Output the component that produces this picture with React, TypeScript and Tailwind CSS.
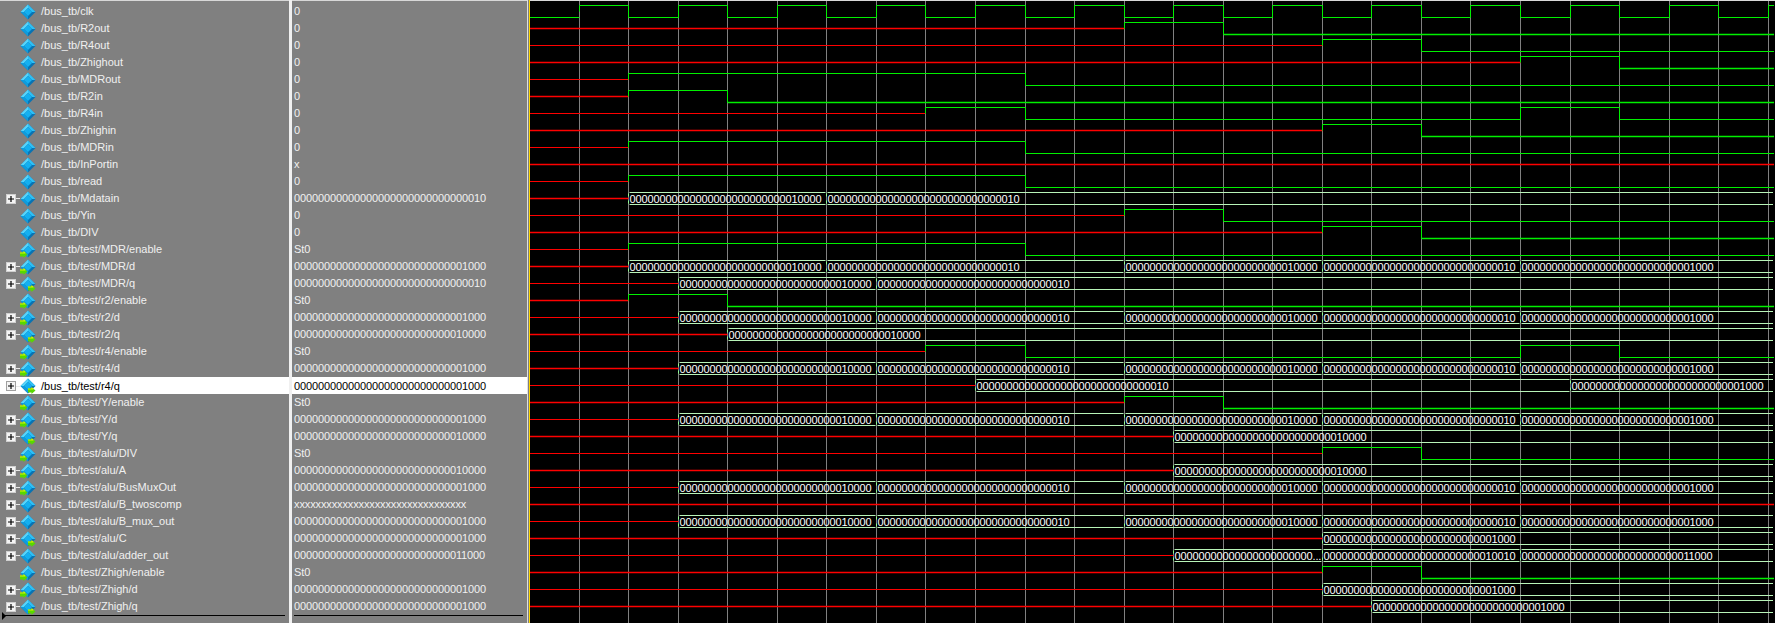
import React from "react";

type Icon = "plain" | "in" | "out";
type Seg = [number, string];

const bits = (tail: string) => tail.padStart(32, "0");
const xOf = (k: number) => Math.round(530 + 49.55 * k) + 0.5;
const TICKS = Array.from({ length: 26 }, (_, k) => k).filter((k) => k > 0);

// levels: "x" unknown, "1" high, "0" low, anything else is a bus value
const clock: Seg[] = [[0, "x0"]];
for (let k = 1; k <= 26; k++) clock.push([k, k % 2 ? "1" : "0"]);

const pulse = (from: number, to: number): Seg[] => [[0, "x"], [from, "1"], [to, "0"]];
const v10000 = bits("10000");
const v10 = bits("10");
const v1000 = bits("1000");
const dBus = (start: number): Seg[] => [[0, "x"], [start, v10000], [start + 4, v10], [12, v10000], [16, v10], [20, v1000]];

type Row = { name: string; value: string; icon: Icon; bus?: boolean; wave: Seg[] };

const rows: Row[] = [
  { name: "/bus_tb/clk", value: "0", icon: "plain", wave: clock },
  { name: "/bus_tb/R2out", value: "0", icon: "plain", wave: pulse(12, 14) },
  { name: "/bus_tb/R4out", value: "0", icon: "plain", wave: pulse(16, 18) },
  { name: "/bus_tb/Zhighout", value: "0", icon: "plain", wave: pulse(20, 22) },
  { name: "/bus_tb/MDRout", value: "0", icon: "plain", wave: pulse(2, 10) },
  { name: "/bus_tb/R2in", value: "0", icon: "plain", wave: pulse(2, 4) },
  { name: "/bus_tb/R4in", value: "0", icon: "plain", wave: [[0, "x"], [8, "1"], [10, "0"], [20, "1"], [22, "0"]] },
  { name: "/bus_tb/Zhighin", value: "0", icon: "plain", wave: pulse(16, 18) },
  { name: "/bus_tb/MDRin", value: "0", icon: "plain", wave: pulse(2, 10) },
  { name: "/bus_tb/InPortin", value: "x", icon: "plain", wave: [[0, "x"]] },
  { name: "/bus_tb/read", value: "0", icon: "plain", wave: pulse(2, 10) },
  { name: "/bus_tb/Mdatain", value: v10, icon: "plain", bus: true, wave: [[0, "x"], [2, v10000], [6, v10]] },
  { name: "/bus_tb/Yin", value: "0", icon: "plain", wave: pulse(12, 14) },
  { name: "/bus_tb/DIV", value: "0", icon: "plain", wave: pulse(16, 18) },
  { name: "/bus_tb/test/MDR/enable", value: "St0", icon: "in", wave: pulse(2, 10) },
  { name: "/bus_tb/test/MDR/d", value: v1000, icon: "in", bus: true, wave: [[0, "x"], [2, v10000], [6, v10], [12, v10000], [16, v10], [20, v1000]] },
  { name: "/bus_tb/test/MDR/q", value: v10, icon: "out", bus: true, wave: [[0, "x"], [3, v10000], [7, v10]] },
  { name: "/bus_tb/test/r2/enable", value: "St0", icon: "in", wave: pulse(2, 4) },
  { name: "/bus_tb/test/r2/d", value: v1000, icon: "in", bus: true, wave: dBus(3) },
  { name: "/bus_tb/test/r2/q", value: v10000, icon: "out", bus: true, wave: [[0, "x"], [4, v10000]] },
  { name: "/bus_tb/test/r4/enable", value: "St0", icon: "in", wave: [[0, "x"], [8, "1"], [10, "0"], [20, "1"], [22, "0"]] },
  { name: "/bus_tb/test/r4/d", value: v1000, icon: "in", bus: true, wave: dBus(3) },
  { name: "/bus_tb/test/r4/q", value: v1000, icon: "out", bus: true, wave: [[0, "x"], [9, v10], [21, v1000]] },
  { name: "/bus_tb/test/Y/enable", value: "St0", icon: "in", wave: pulse(12, 14) },
  { name: "/bus_tb/test/Y/d", value: v1000, icon: "in", bus: true, wave: dBus(3) },
  { name: "/bus_tb/test/Y/q", value: v10000, icon: "out", bus: true, wave: [[0, "x"], [13, v10000]] },
  { name: "/bus_tb/test/alu/DIV", value: "St0", icon: "in", wave: pulse(16, 18) },
  { name: "/bus_tb/test/alu/A", value: v10000, icon: "in", bus: true, wave: [[0, "x"], [13, v10000]] },
  { name: "/bus_tb/test/alu/BusMuxOut", value: v1000, icon: "in", bus: true, wave: dBus(3) },
  { name: "/bus_tb/test/alu/B_twoscomp", value: "x".repeat(32), icon: "plain", bus: true, wave: [[0, "x"]] },
  { name: "/bus_tb/test/alu/B_mux_out", value: v1000, icon: "plain", bus: true, wave: dBus(3) },
  { name: "/bus_tb/test/alu/C", value: v1000, icon: "out", bus: true, wave: [[0, "x"], [16, v1000]] },
  { name: "/bus_tb/test/alu/adder_out", value: bits("11000"), icon: "plain", bus: true, wave: [[0, "x"], [13, "00000000000000000000000..."], [16, bits("10010")], [20, bits("11000")]] },
  { name: "/bus_tb/test/Zhigh/enable", value: "St0", icon: "in", wave: pulse(16, 18) },
  { name: "/bus_tb/test/Zhigh/d", value: v1000, icon: "in", bus: true, wave: [[0, "x"], [16, v1000]] },
  { name: "/bus_tb/test/Zhigh/q", value: v1000, icon: "out", bus: true, wave: [[0, "x"], [17, v1000]] },
];

const SELECTED = 22;
const GREEN = "#00f000";
const RED = "#ff0000";
const BUS = "#b8f4b8";

function SignalIcon({ icon }: { icon: Icon }) {
  return (
    <svg width="16" height="16" viewBox="0 0 16 16" className="shrink-0 overflow-visible">
      <polygon points="8,0.5 15.5,8 8,15.5 0.5,8" fill="#0874b4" />
      <polygon points="8,0.5 0.5,8 4,8 8,4" fill="#58d4fa" />
      <polygon points="8,0.5 15.5,8 12,8 8,4" fill="#30c0f4" />
      <polygon points="0.5,8 8,15.5 8,12 4,8" fill="#109cdc" />
      <polygon points="4,8 8,4 12,8 8,12" fill="#14b0f0" />
      {icon === "in" && (
        <>
          <path d="M0 10.5h3.5V9l4 3.5-4 3.5v-1.5H0z" fill="#58d800" />
          <path d="M0 10.5h3.5V9l2 1.75v.75H0z" fill="#d8f400" />
        </>
      )}
      {icon === "out" && (
        <>
          <path d="M8 10.5h3.5V9l4 3.5-4 3.5v-1.5H8z" fill="#58d800" />
          <path d="M8 10.5h3.5V9l2 1.75v.75H8z" fill="#d8f400" />
        </>
      )}
    </svg>
  );
}

function Expander({ selected }: { selected: boolean }) {
  return (
    <span className="flex w-[14px] shrink-0 items-center">
      <span
        className={`flex h-[10px] w-[10px] shrink-0 items-center justify-center border bg-[#f4f4f4] text-black ${
          selected ? "border-[#a0a0a0]" : "border-[#d0d0d0]"
        }`}
      >
        <svg width="6" height="6" viewBox="0 0 6 6">
          <path d="M0 3h6M3 0v6" stroke="#000" strokeWidth="1.2" />
        </svg>
      </span>
      <span className="h-px w-[4px] bg-[#e8e8e8]" />
    </span>
  );
}

function Wave({ row, index }: { row: Row; index: number }) {
  const top = 5.5 + 17 * index;
  const low = 17.5 + 17 * index;
  const mid = 11.5 + 17 * index;
  // every other row lands thicker in the reference
  const sw = index % 2 ? 1.5 : 1;
  const yFor = (lv: string) => (lv === "1" ? top : low);
  const out: React.ReactNode[] = [];

  row.wave.forEach(([k, lv], i) => {
    const x = k === 0 ? 531 : xOf(k);
    const next = row.wave[i + 1];
    const endX = next ? xOf(next[0]) : 1775;
    if (lv === "x" || lv === "x0") {
      if (lv === "x") out.push(<path key={i} d={`M${x} ${mid}H${endX}`} stroke={RED} strokeWidth={sw} fill="none" />);
      else {
        out.push(<path key={i} d={`M531 ${low}H${endX}`} stroke={GREEN} fill="none" />);
        out.push(<path key="tick" d={`M530.5 ${mid}V${low}`} stroke={RED} fill="none" />);
      }
      if (next && (next[1] === "1" || next[1] === "0")) {
        out.push(<path key={`e${i}`} d={`M${endX} ${mid}V${yFor(next[1])}`} stroke={GREEN} fill="none" />);
      }
    } else if (lv === "1" || lv === "0") {
      const y = yFor(lv);
      let d = `M${x} ${y}H${endX}`;
      if (next) d += `V${yFor(next[1])}`;
      out.push(<path key={i} d={d} stroke={GREEN} strokeWidth={lv === "0" ? sw : 1} fill="none" />);
    } else {
      out.push(
        <g key={i}>
          <path
            d={`M${x + 1} ${top}H${endX - 1}M${x + 1} ${low}H${endX - 1}`}
            stroke={BUS}
            fill="none"
          />
          <path
            d={`M${x} ${top + 1}v3M${x} ${low - 1}v-3`}
            stroke="#90ff90"
            fill="none"
          />
          <text x={x + 1} y={mid + 4} fill="#ffffff" className="text-[11px] tracking-[-0.12px]">
            {lv}
          </text>
        </g>
      );
    }
  });
  return <g>{out}</g>;
}

export default function App() {
  return (
    <div className="flex h-[623px] w-[1775px] overflow-hidden bg-[#808080] font-['Liberation_Sans',Arial,sans-serif] text-[11px] text-[#f0f0f0]">
      {/* signal names */}
      <div className="relative w-[289px] shrink-0 border-t border-[#d8d8d8] pt-[2px]">
        {rows.map((r, i) => (
          <div
            key={r.name}
            className={`flex h-[17px] items-center pl-[6px] ${i === SELECTED ? "bg-white pt-px text-black" : ""}`}
          >
            {r.bus ? <Expander selected={i === SELECTED} /> : <span className="w-[14px] shrink-0" />}
            <SignalIcon icon={r.icon} />
            <span className="ml-[5px] whitespace-nowrap">{r.name}</span>
          </div>
        ))}
        <div className="absolute bottom-[7px] left-[3px] right-[4px] h-px bg-black" />
        <span className="absolute bottom-[3px] left-[2px] h-0 w-0 border-y-[4px] border-l-[4px] border-y-transparent border-l-black" />
      </div>

      <div className="w-[3px] shrink-0 bg-[#f0f0f0]" />

      {/* signal values */}
      <div className="relative w-[235px] shrink-0 border-t border-[#d8d8d8] pt-[2px]">
        {rows.map((r, i) => (
          <div
            key={r.name}
            className={`flex h-[17px] items-center pl-[2px] ${i === SELECTED ? "bg-white pt-px text-black" : ""}`}
          >
            <span className="whitespace-nowrap tracking-[-0.12px]">{r.value}</span>
          </div>
        ))}
        <div className="absolute bottom-[7px] left-[2px] right-[4px] h-px bg-black" />
      </div>

      <div className="w-px shrink-0 bg-[#e0e0e0]" />
      <div className="w-px shrink-0" />
      <div className="w-px shrink-0 bg-[#ffd800]" />

      {/* wave window */}
      <div className="flex-1 border-t border-[#d8d8d8] bg-black">
        <svg width="1244" height="623" viewBox="531 1 1244 623" className="block">
          {TICKS.map((k) => (
            <path key={k} d={`M${xOf(k)} 1V623`} stroke="#808080" />
          ))}
          {rows.map((r, i) => (
            <Wave key={r.name} row={r} index={i} />
          ))}
        </svg>
      </div>
    </div>
  );
}
